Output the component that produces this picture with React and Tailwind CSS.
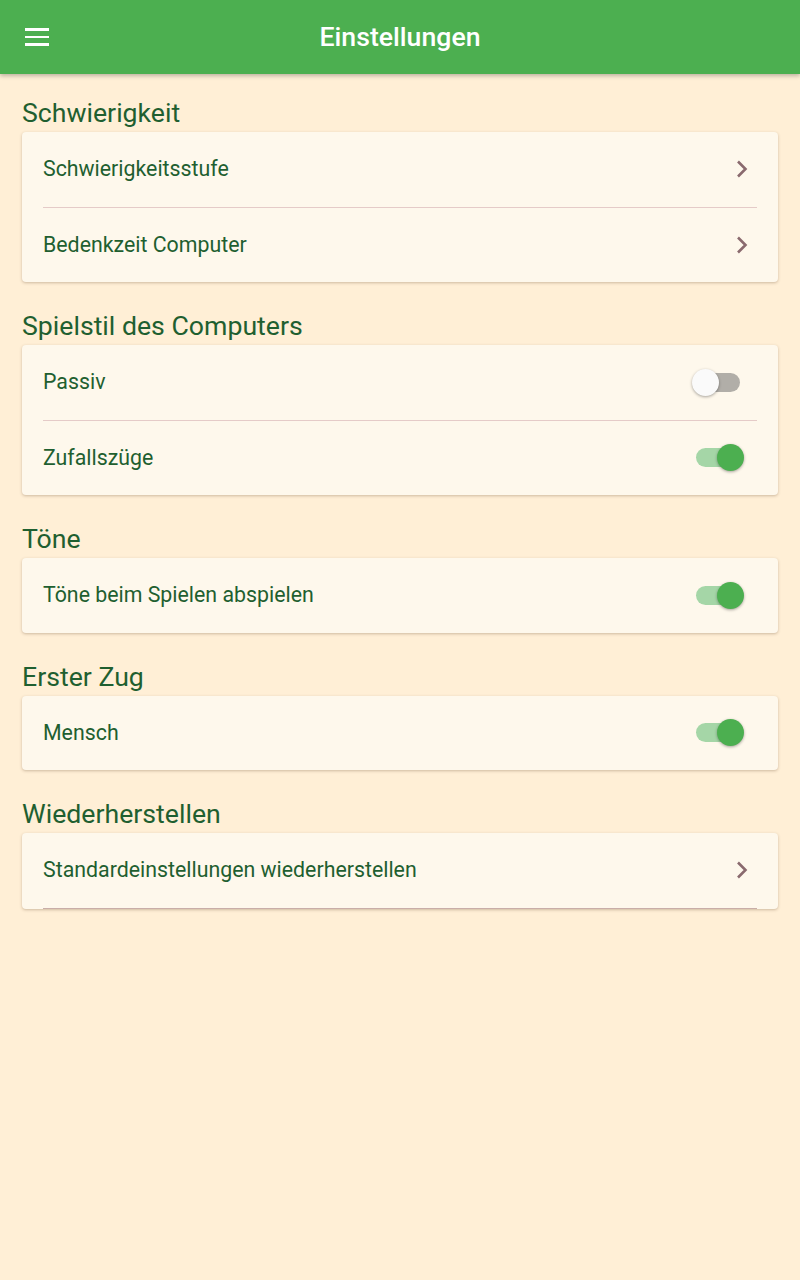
import { Fragment } from "react";

const sections = [
  {
    title: "Schwierigkeit",
    items: [
      { label: "Schwierigkeitsstufe", type: "link" },
      { label: "Bedenkzeit Computer", type: "link" },
    ],
  },
  {
    title: "Spielstil des Computers",
    items: [
      { label: "Passiv", type: "toggle", on: false },
      { label: "Zufallszüge", type: "toggle", on: true },
    ],
  },
  {
    title: "Töne",
    items: [{ label: "Töne beim Spielen abspielen", type: "toggle", on: true }],
  },
  {
    title: "Erster Zug",
    items: [{ label: "Mensch", type: "toggle", on: true }],
  },
  {
    title: "Wiederherstellen",
    items: [{ label: "Standardeinstellungen wiederherstellen", type: "link" }],
    bottomLine: true,
  },
];

const Chevron = () => (
  <svg width="14" height="20" viewBox="0 0 14 20" className="mr-[5px]">
    <polyline
      points="3,2.5 10.5,10 3,17.5"
      fill="none"
      stroke="#8a6a6e"
      strokeWidth="2.6"
    />
  </svg>
);

const Toggle = ({ on }) => (
  <div className="relative mr-[38px] h-[19px] w-[44px]">
    <div
      className={`h-full w-full rounded-full ${
        on ? "bg-[#a5d6a7]" : "bg-[#b1aea8]"
      }`}
    />
    <div
      className={`absolute top-[-4px] h-[27px] w-[27px] rounded-full shadow-[0_1px_3px_rgba(0,0,0,0.35)] ${
        on ? "right-[-4px] bg-[#4caf50]" : "left-[-4px] bg-[#fafafa]"
      }`}
    />
  </div>
);

const Row = ({ item }) => (
  <div className="flex h-[74.5px] items-center justify-between pl-[21px]">
    <span className="text-[21.33px] text-[#1f5f30]">{item.label}</span>
    {item.type === "link" ? (
      <div className="mr-[24px] flex items-center">
        <Chevron />
      </div>
    ) : (
      <Toggle on={item.on} />
    )}
  </div>
);

export default function App() {
  return (
    <div
      className="min-h-[1280px] bg-[#ffefd6]"
      style={{ fontFamily: "Roboto, 'Liberation Sans', sans-serif" }}
    >
      <header className="relative flex h-[74px] items-center bg-[#4caf50] shadow-[0_2px_4px_rgba(0,0,0,0.25)]">
        <button className="absolute left-[25px] flex flex-col gap-[5px]">
          <span className="block h-[2.5px] w-[24px] bg-white" />
          <span className="block h-[2.5px] w-[24px] bg-white" />
          <span className="block h-[2.5px] w-[24px] bg-white" />
        </button>
        <h1 className="w-full text-center text-[26.67px] font-medium text-white">
          Einstellungen
        </h1>
      </header>

      <main className="flex flex-col gap-[25px] px-[22px] pt-[20px]">
        {sections.map((s) => (
          <section key={s.title}>
            <h2 className="flex h-[38px] items-center text-[26.67px] text-[#1f5f30]">
              {s.title}
            </h2>
            <div className="rounded-[4px] bg-[#fef8ec] shadow-[0_1px_3px_rgba(90,60,30,0.3)]">
              {s.items.map((item, i) => (
                <Fragment key={item.label}>
                  {i > 0 && <div className="mx-[21px] h-px bg-[#e5cbc8]" />}
                  <Row item={item} />
                </Fragment>
              ))}
              {s.bottomLine && <div className="mx-[21px] h-px bg-[#c9aea8]" />}
            </div>
          </section>
        ))}
      </main>
    </div>
  );
}
